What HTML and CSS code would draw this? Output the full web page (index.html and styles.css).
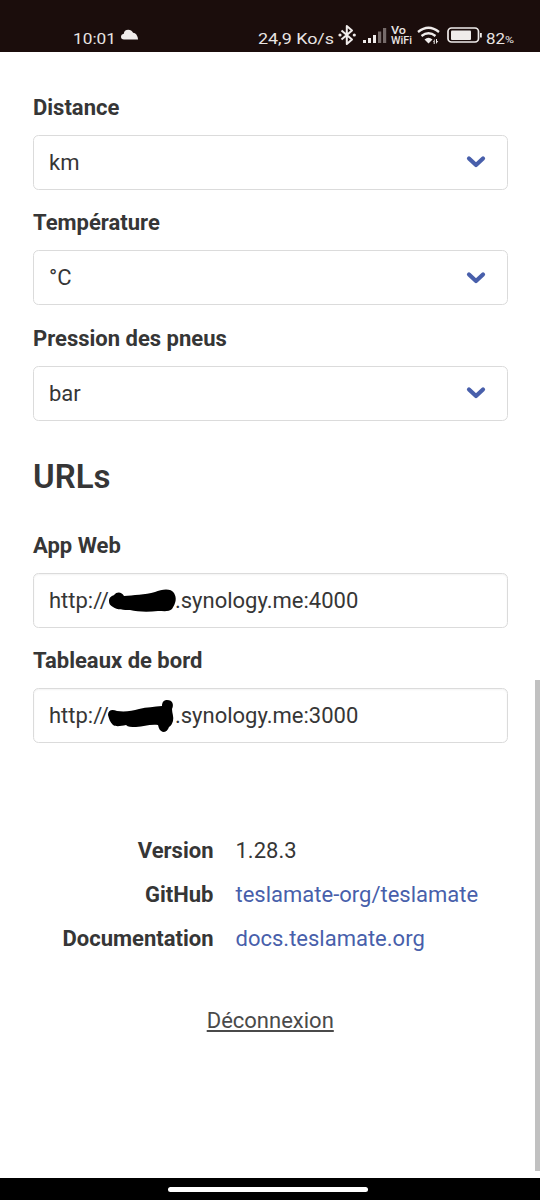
FILE: index.html
```html
<!DOCTYPE html>
<html lang="fr">
<head>
<meta charset="utf-8">
<title>TeslaMate</title>
<link rel="stylesheet" href="styles.css">
</head>
<body>
<header class="status">
  <svg width="540" height="52" viewBox="0 0 540 52">
    <g class="status-text">
      <text x="73" y="43.5" font-size="15.500" textLength="43" lengthAdjust="spacingAndGlyphs">10:01</text>
      <text x="258" y="43.500" font-size="15.500" textLength="76" lengthAdjust="spacingAndGlyphs">24,9 Ko/s</text>
      <text x="486" y="43.500" font-size="14.500" textLength="19" lengthAdjust="spacingAndGlyphs">82</text>
      <text x="505" y="42.500" font-size="9" textLength="9" lengthAdjust="spacingAndGlyphs">%</text>
      <text class="vo" x="391" y="33.500" font-size="10.500" textLength="15" lengthAdjust="spacingAndGlyphs">Vo</text>
      <text class="vo" x="391" y="44" font-size="10" textLength="21" lengthAdjust="spacingAndGlyphs">WiFi</text>
    </g>
    <path class="fill" d="M124 39.500q-3 0-3-2.700 0-2.500 2.800-3 .3-4 4.500-4 3.200 0 4.800 3 4 .3 5 6.700z"/>
    <path class="line" stroke-width="2" d="M341.500 30.500l10.500 9-5.200 4.500V26l5.200 4.500-10.500 9"/>
    <circle class="fill" cx="340" cy="35" r="1.600"/><circle class="fill" cx="354.300" cy="35" r="1.600"/>
    <path class="fill" d="M363 40h3v3h-3zM368 38h3v5h-3zM373 35h3v8h-3z"/>
    <path class="dim" d="M378 31.500h3.200V43H378zM383 28h3.200v15H383z"/>
    <path class="line" stroke-width="2.300" d="M418 32q10.500-8.500 21 0M421.500 36q7-5.500 14 0"/>
    <path class="fill" d="M424.500 39.500q4-3.500 8 0l-4 4z"/>
    <path class="fill" d="M433 42l1.700-3v5h-1v-2zM436 39h1v2h1.300l-2.300 3z"/>
    <rect class="line" stroke-width="1.700" x="448" y="28" width="30.500" height="14" rx="3.500"/>
    <rect class="fill" x="451" y="30.500" width="20" height="9.500" rx="1"/>
    <path class="fill" d="M480 33h1.800v4.500H480z"/>
  </svg>
</header>

<main class="page">
  <form>
    <div class="field">
      <label class="label">Distance</label>
      <div class="control select"><span>km</span>
        <svg class="chevron" viewBox="0 0 20 14"><path d="M3 3.500l7 6.500 7-6.500"/></svg></div>
    </div>
    <div class="field">
      <label class="label">Température</label>
      <div class="control select"><span>°C</span>
        <svg class="chevron" viewBox="0 0 20 14"><path d="M3 3.500l7 6.500 7-6.500"/></svg></div>
    </div>
    <div class="field">
      <label class="label">Pression des pneus</label>
      <div class="control select"><span>bar</span>
        <svg class="chevron" viewBox="0 0 20 14"><path d="M3 3.500l7 6.500 7-6.500"/></svg></div>
    </div>

    <h2 class="title">URLs</h2>

    <div class="field">
      <label class="label">App Web</label>
      <div class="control input"><span>http://</span>
        <svg class="mask" viewBox="0 0 66 34"><path d="M0 18c0-4 3-5 5-6 3-4 8-3 10 1 9-1 21-1 31-4 7-3 16-4 19 1 3 5 2 10-2 16-3 3-8 2-14 2-9 1-20 1-28-1-6 0-13 0-17-3-3-2-4-3-4-6z"/></svg>
        <span>.synology.me:4000</span></div>
    </div>
    <div class="field">
      <label class="label">Tableaux de bord</label>
      <div class="control input"><span>http://</span>
        <svg class="mask" viewBox="0 0 66 34"><path d="M-1 16c0-5 4-6 9-4 8 1 15 0 22-2 8-2 15-2 23-3 0-4 2-6 5-6 6 0 7 5 5 9 0 4 2 8 1 12-1 3-2 5-4 6-1 3-3 5-6 5-3-1-4-3-5-7-9-1-14 2-22 2-5 0-8 0-10-2-5 1-10 2-13 0-3-3-4-6-5-10z"/></svg>
        <span>.synology.me:3000</span></div>
    </div>
  </form>

  <dl class="about">
    <dt>Version</dt><dd>1.28.3</dd>
    <dt>GitHub</dt><dd><a>teslamate-org/teslamate</a></dd>
    <dt>Documentation</dt><dd><a>docs.teslamate.org</a></dd>
  </dl>

  <div class="signout"><a>Déconnexion</a></div>
  <div class="scrollbar"></div>
</main>

<footer class="navbar"><div class="handle"></div></footer>
</body>
</html>
```
FILE: styles.css
```css
* { box-sizing: border-box; }
body {
  margin: 0;
  width: 540px;
  height: 1200px;
  display: flex;
  flex-direction: column;
  overflow: hidden;
  background: #fff;
  color: #363636;
  font: 22px/33px Roboto, sans-serif;
}
.status { height: 52px; background: #1b0d0c; }
.status svg { display: block; }
.status-text { fill: #e9e4e3; font-family: Roboto, sans-serif; font-weight: 400; }
.vo { font-weight: 500; }
.fill { fill: #f0eceb; }
.dim { fill: #766b6a; }
.line { fill: none; stroke: #f0eceb; stroke-linejoin: round; }
.page { position: relative; flex: 1; padding: 38.9px 32.5px 0 33px; }
.field { margin-bottom: 16.5px; }
.label { display: block; margin-bottom: 11px; font-weight: 700; }
.control {
  display: flex;
  align-items: center;
  height: 55px;
  padding: 0 15px;
  border: 1px solid #dbdbdb;
  border-radius: 5.5px;
}
.select { justify-content: space-between; padding-right: 21px; }
.input { box-shadow: inset 0 1px 2px rgba(10, 10, 10, .05); }
.chevron { width: 20px; height: 14px; }
.chevron path { fill: none; stroke: #485fab; stroke-width: 4.2; stroke-linecap: round; stroke-linejoin: round; }
.mask { width: 66px; height: 34px; flex: none; overflow: visible; }
.mask path { fill: #000; }
.title { margin: 36.2px 0 31.7px; font-size: 33px; line-height: 40px; font-weight: 600; }
.about {
  display: grid;
  grid-template-columns: 180.5px 1fr;
  column-gap: 22px;
  row-gap: 11px;
  margin: 90.9px 0 0;
}
.about dt { font-weight: 700; text-align: right; }
.about dd { margin: 0; }
.about a { color: #485fab; }
.signout { margin-top: 49px; text-align: center; }
.signout a { color: #4a4a4a; text-decoration: underline; }
.scrollbar { position: absolute; right: 0; top: 628px; width: 5px; height: 491px; background: #c1c1c1; }
.navbar { display: flex; justify-content: center; height: 22px; padding: 9px 4px 0 0; background: #000; }
.handle { width: 200px; height: 5px; border-radius: 3px; background: #fff; }
```
